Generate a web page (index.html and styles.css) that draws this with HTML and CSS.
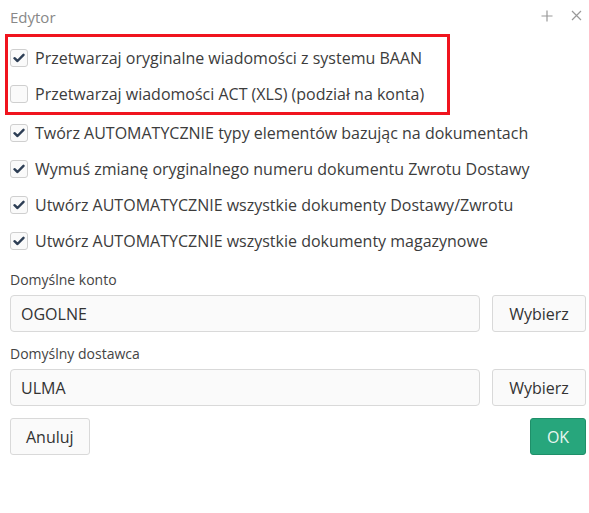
FILE: index.html
```html
<!DOCTYPE html>
<html lang="pl">
<head>
<meta charset="utf-8">
<title>Edytor</title>
<link rel="stylesheet" href="styles.css">
</head>
<body>
<div class="dialog">
  <div class="header">
    <span class="title">Edytor</span>
    <span class="tools">
      <svg class="tool" width="12" height="12" viewBox="0 0 12 12"><path d="M6 0.5V11.5M0.5 6H11.5" stroke="#999" stroke-width="1.2" fill="none"/></svg>
      <svg class="tool" width="11" height="11" viewBox="0 0 11 11"><path d="M1 1L10 10M10 1L1 10" stroke="#999" stroke-width="1.2" fill="none"/></svg>
    </span>
  </div>
  <div class="highlight">
    <label class="row"><span class="cb checked"><svg width="12" height="10" viewBox="0 0 12 10"><path d="M1.5 5.2L4.5 8L10.5 1.8" stroke="#2d3e55" stroke-width="2.4" fill="none" stroke-linecap="round" stroke-linejoin="round"/></svg></span><span>Przetwarzaj oryginalne wiadomości z systemu BAAN</span></label>
    <label class="row"><span class="cb"></span><span>Przetwarzaj wiadomości ACT (XLS) (podział na konta)</span></label>
  </div>
  <label class="row"><span class="cb checked"><svg width="12" height="10" viewBox="0 0 12 10"><path d="M1.5 5.2L4.5 8L10.5 1.8" stroke="#2d3e55" stroke-width="2.4" fill="none" stroke-linecap="round" stroke-linejoin="round"/></svg></span><span>Twórz AUTOMATYCZNIE typy elementów bazując na dokumentach</span></label>
  <label class="row"><span class="cb checked"><svg width="12" height="10" viewBox="0 0 12 10"><path d="M1.5 5.2L4.5 8L10.5 1.8" stroke="#2d3e55" stroke-width="2.4" fill="none" stroke-linecap="round" stroke-linejoin="round"/></svg></span><span>Wymuś zmianę oryginalnego numeru dokumentu Zwrotu Dostawy</span></label>
  <label class="row"><span class="cb checked"><svg width="12" height="10" viewBox="0 0 12 10"><path d="M1.5 5.2L4.5 8L10.5 1.8" stroke="#2d3e55" stroke-width="2.4" fill="none" stroke-linecap="round" stroke-linejoin="round"/></svg></span><span>Utwórz AUTOMATYCZNIE wszystkie dokumenty Dostawy/Zwrotu</span></label>
  <label class="row"><span class="cb checked"><svg width="12" height="10" viewBox="0 0 12 10"><path d="M1.5 5.2L4.5 8L10.5 1.8" stroke="#2d3e55" stroke-width="2.4" fill="none" stroke-linecap="round" stroke-linejoin="round"/></svg></span><span>Utwórz AUTOMATYCZNIE wszystkie dokumenty magazynowe</span></label>

  <div class="field first">
    <div class="flabel">Domyślne konto</div>
    <div class="fline">
      <div class="input">OGOLNE</div>
      <button class="btn pick">Wybierz</button>
    </div>
  </div>
  <div class="field">
    <div class="flabel">Domyślny dostawca</div>
    <div class="fline">
      <div class="input">ULMA</div>
      <button class="btn pick">Wybierz</button>
    </div>
  </div>
  <div class="footer">
    <button class="btn">Anuluj</button>
    <button class="btn ok">OK</button>
  </div>
</div>
</body>
</html>
```
FILE: styles.css
```css
html, body {
  margin: 0;
  padding: 0;
  background: #fff;
}
body {
  font-family: "Open Sans", "Noto Sans", sans-serif;
  color: #3a3a3a;
}
.dialog {
  width: 589px;
  padding: 0 3px 0 10px;
  box-sizing: border-box;
}
.header {
  display: flex;
  justify-content: space-between;
  align-items: center;
  height: 34px;
}
.title {
  font-size: 15px;
  color: #888;
  margin-top: -1px;
}
.tools {
  display: flex;
  align-items: center;
  gap: 18px;
  margin-right: 4px;
  margin-top: -3px;
}
.tool { display: block; }
.highlight {
  margin-left: -5px;
  width: 445px;
  box-sizing: border-box;
  border: 3px solid #f0141e;
  padding: 3px 0 0 2px;
}
.row {
  display: flex;
  align-items: center;
  gap: 7px;
  height: 36px;
  font-size: 16px;
  color: #3c3c3c;
}
.cb {
  width: 16px;
  height: 16px;
  border: 1px solid #cfcfcf;
  border-radius: 3px;
  background: #fafafa;
  display: flex;
  align-items: center;
  justify-content: center;
  flex: none;
}
.field { margin-top: 12px; }
.field.first { margin-top: 11px; }
.flabel {
  font-size: 14px;
  color: #444;
  line-height: 20px;
  margin-bottom: 5px;
}
.fline {
  display: flex;
  gap: 12px;
}
.input {
  flex: 1;
  height: 37px;
  box-sizing: border-box;
  border: 1px solid #d9d9d9;
  border-radius: 4px;
  background: #fafafa;
  font-size: 16px;
  color: #333;
  padding-left: 10px;
  display: flex;
  align-items: center;
}
.btn {
  font-family: "Open Sans", "Noto Sans", sans-serif;
  font-size: 16px;
  color: #333;
  height: 37px;
  box-sizing: border-box;
  border: 1px solid #d9d9d9;
  border-radius: 3px;
  background: #fafafa;
  padding: 0 15px;
}
.pick { width: 94px; }
.footer {
  display: flex;
  justify-content: space-between;
  margin-top: 12px;
}
.ok {
  background: #27a67c;
  border-color: #1f8f69;
  color: #e8f6f0;
  width: 56px;
  padding: 0;
}
```
